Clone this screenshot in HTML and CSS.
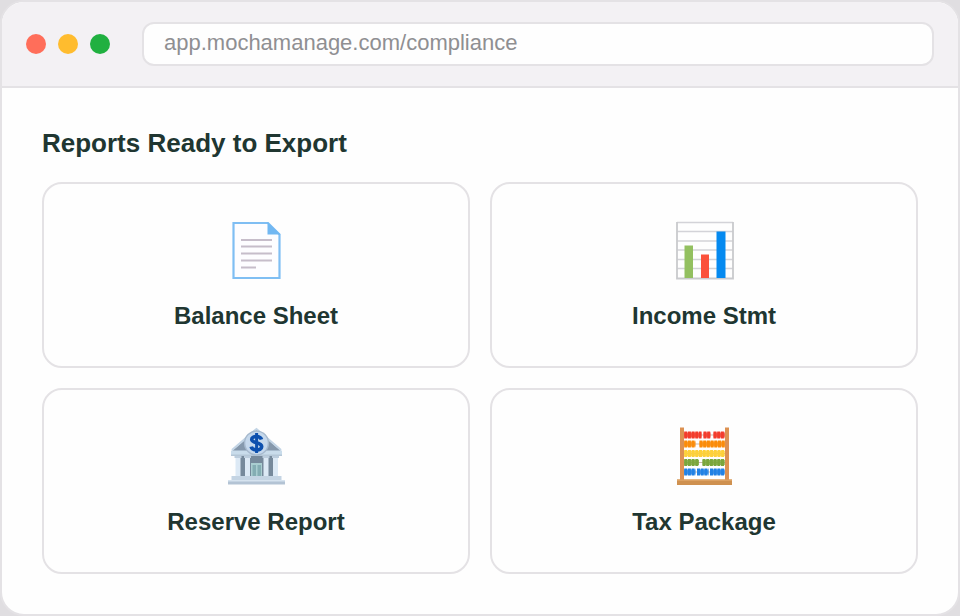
FILE: index.html
```html
<!DOCTYPE html>
<html lang="en">
<head>
    <meta charset="UTF-8">
    <meta name="viewport" content="width=device-width, initial-scale=1.0">
    <title>Compliance Reports</title>
    <link rel="stylesheet" href="styles.css">
</head>
<body>
    <div class="browser">
        <header class="browser-bar">
            <div class="dots">
                <span class="dot red"></span>
                <span class="dot yellow"></span>
                <span class="dot green"></span>
            </div>
            <input class="address" type="text" aria-label="Address" value="app.mochamanage.com/compliance">
        </header>

        <main class="content">
            <h1>Reports Ready to Export</h1>

            <div class="report-grid">
                <button class="report-card" type="button">
                    <svg class="icon" viewBox="0 0 60 60" aria-hidden="true">
                        <path d="M7.5 3H42L53.5 14.5V58H7.5Z" fill="#fdfdff" stroke="#7fbef3" stroke-width="2.2"/>
                        <path d="M41.5 2L54.5 14.5H41.5Z" fill="#72b8f2"/>
                        <path d="M15 20H46M15 26.5H46M15 33.5H46M15 40.5H46M15 47.5H30" stroke="#c6bdca" stroke-width="1.8"/>
                    </svg>
                    <span>Balance Sheet</span>
                </button>

                <button class="report-card" type="button">
                    <svg class="icon" viewBox="0 0 60 60" aria-hidden="true">
                        <path d="M3 2.5H59M3 11.5H59M3 21H59M3 30H59M3 39.5H59M3 48.5H59" stroke="#d3d3d8" stroke-width="1.3"/>
                        <path d="M3 2V58.5H59V2" fill="none" stroke="#c9cacd" stroke-width="1.8"/>
                        <path d="M10.5 25.5H19V58H10.5Z" fill="#93c060"/>
                        <path d="M27 34.5H35V58H27Z" fill="#fb513b"/>
                        <path d="M42.5 11.5H51.5V58H42.5Z" fill="#058af0"/>
                    </svg>
                    <span>Income Stmt</span>
                </button>

                <button class="report-card" type="button">
                    <svg class="icon" viewBox="0 0 60 60" aria-hidden="true">
                        <path d="M6 25L30.5 4L55 25Z" fill="#8598ac"/>
                        <path d="M6 24L30.5 3L55 24" fill="none" stroke="#c2d4e5" stroke-width="2"/>
                        <path d="M10 29H52V51H10Z" fill="#76899b"/>
                        <path d="M25 37H36V51H25Z" fill="#a9cdd0"/>
                        <path d="M26.5 39H30V51H26.5ZM31.5 39H35V51H31.5Z" fill="#84adb3"/>
                        <path d="M9.5 29H14.5V51H9.5ZM19 29H24V51H19ZM37.5 29H42.5V51H37.5ZM47 29H52V51H47Z" fill="#dce9f5"/>
                        <path d="M8.5 29H15.5V32H8.5ZM18 29H25V32H18ZM36.5 29H43.5V32H36.5ZM46 29H53V32H46Z" fill="#bccddd"/>
                        <path d="M5 24.5H56V29.5H5Z" fill="#c9dceb"/>
                        <path d="M5 28.5H56V30H5Z" fill="#b5c7d7"/>
                        <path d="M5.5 50H55.5V54H5.5Z" fill="#c4d4e3"/>
                        <path d="M2 54H59V58.5H2Z" fill="#b3c3d4"/>
                        <path d="M2 54H59V55.5H2Z" fill="#d6e3ef"/>
                        <circle cx="30.5" cy="17" r="12.6" fill="#a6b9cd"/>
                        <circle cx="30.5" cy="17" r="11.2" fill="#c5d8ec"/>
                        <path d="M35.5 13.5C34.5 9.8 25.8 9.3 25.7 13.5C25.6 17.5 35.8 16 35.7 20.7C35.6 25.2 26 24.8 25.2 20.7" fill="none" stroke="#0d50ae" stroke-width="3.6"/>
                        <path d="M30.6 7V27" stroke="#0d50ae" stroke-width="3"/>
                    </svg>
                    <span>Reserve Report</span>
                </button>

                <button class="report-card" type="button">
                    <svg class="icon" viewBox="0 0 60 60" aria-hidden="true">
                        <path d="M8 9H52M8 18H52M8 27.5H52M8 36.5H52M8 46H52" stroke="#c9b8a8"/>
                        <g class="bead-core">
                            <path d="M10.2 9H27.5M29.5 9H36.5M39.5 9H50.8" stroke="#f33c2c"/>
                            <path d="M10.2 18H21.5M25.5 18H50.8" stroke="#fb8c0a"/>
                            <path d="M10.2 27.5H50.8" stroke="#fdd03a"/>
                            <path d="M10.2 36.5H25M28.5 36.5H50.8" stroke="#7aa63c"/>
                            <path d="M10.2 46H21.5M23 46H34.5M36 46H50.8" stroke="#2181e4"/>
                        </g>
                        <g class="bead-edge">
                            <path d="M10.2 9H27.5M29.5 9H36.5M39.5 9H50.8" stroke="#f33c2c"/>
                            <path d="M10.2 18H21.5M25.5 18H50.8" stroke="#fb8c0a"/>
                            <path d="M10.2 27.5H50.8" stroke="#fdd03a"/>
                            <path d="M10.2 36.5H25M28.5 36.5H50.8" stroke="#7aa63c"/>
                            <path d="M10.2 46H21.5M23 46H34.5M36 46H50.8" stroke="#2181e4"/>
                        </g>
                        <path d="M6 1.5H10V54H6ZM51 1.5H55V54H51Z" fill="#dc9152"/>
                        <path d="M3 53.5H58V59H3Z" fill="#cf9150"/>
                        <path d="M3 53.5H58V55H3Z" fill="#dda263"/>
                    </svg>
                    <span>Tax Package</span>
                </button>
            </div>
        </main>
    </div>
</body>
</html>
```
FILE: styles.css
```css
:root {
    --page-background: #e0dee1;
    --bar-background: #f3f1f4;
    --border-color: #e4e2e5;
    --text-color: #203631;
    --muted-color: #8f8f92;
}

* {
    box-sizing: border-box;
    margin: 0;
    padding: 0;
}

body {
    font-family: "Liberation Sans", Arial, sans-serif;
    background: var(--page-background);
    color: var(--text-color);
}

.browser {
    min-height: 100vh;
    background: #fefefe;
    border: 2px solid var(--border-color);
    border-radius: 24px;
    overflow: hidden;
}

.browser-bar {
    display: flex;
    align-items: center;
    gap: 32px;
    padding: 20px 24px;
    background: var(--bar-background);
    border-bottom: 2px solid var(--border-color);
}

.dots {
    display: flex;
    gap: 12px;
}

.dot {
    width: 20px;
    height: 20px;
    border-radius: 50%;
}

.red {
    background: #ff6e5a;
}

.yellow {
    background: #ffbc2e;
}

.green {
    background: #20b040;
}

.address {
    flex: 1;
    min-width: 0;
    height: 44px;
    padding: 0 20px 2px;
    border: 2px solid var(--border-color);
    border-radius: 12px;
    background: #fefefe;
    color: var(--muted-color);
    font-family: inherit;
    font-size: 22px;
}

.content {
    padding: 40px;
}

h1 {
    font-size: 26px;
    line-height: 30px;
    margin-bottom: 24px;
}

.report-grid {
    display: grid;
    grid-template-columns: repeat(2, 1fr);
    gap: 20px;
}

.report-card {
    display: flex;
    flex-direction: column;
    align-items: center;
    gap: 22px;
    padding: 36px 20px;
    border: 2px solid var(--border-color);
    border-radius: 20px;
    background: #fefefe;
    color: inherit;
    font-family: inherit;
    font-size: 24px;
    font-weight: bold;
    line-height: 28px;
    cursor: pointer;
}

.icon {
    width: 60px;
    height: 60px;
}

/* abacus beads: solid middle with notched outer edge */
.bead-core {
    stroke-width: 5;
    opacity: 0.8;
}

.bead-edge {
    stroke-width: 7;
    stroke-dasharray: 3 0.7;
}
```
